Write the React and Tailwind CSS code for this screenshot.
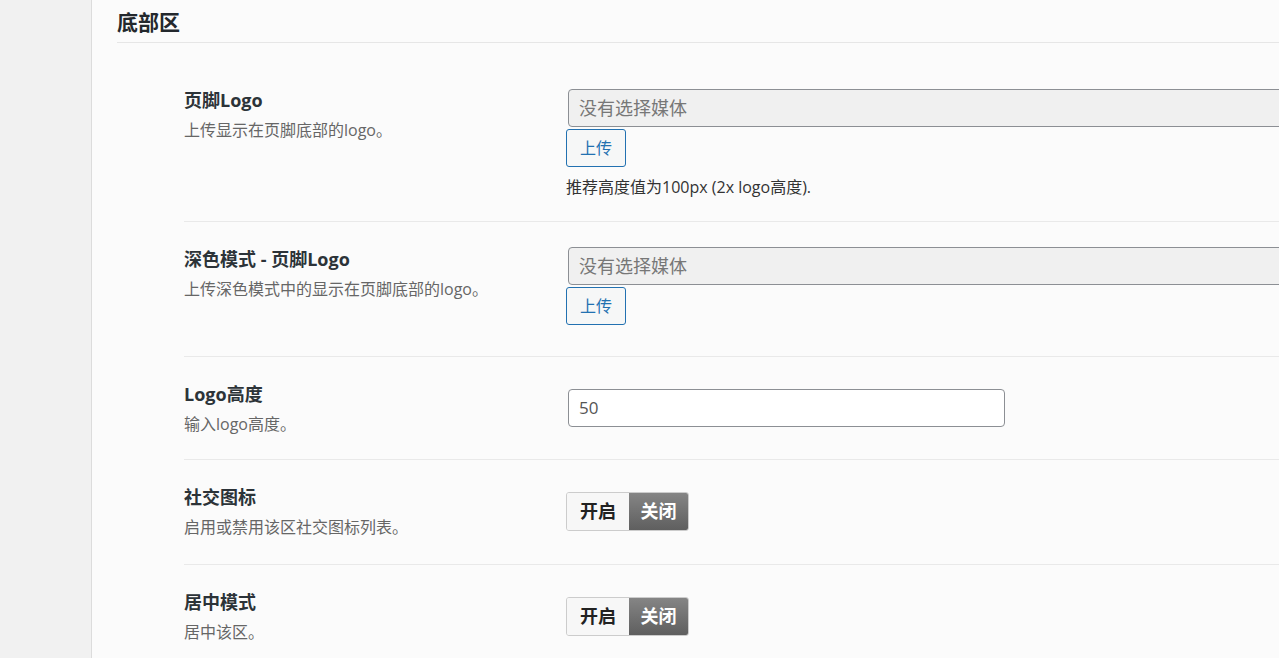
import React from 'react';

const FONT = { fontFamily: '"Open Sans", "Noto Sans CJK SC", sans-serif' };

const Label = ({ title, desc }) => (
    <div className="w-[382px] shrink-0 pt-[24px]">
        <div className="text-[18px] leading-[26px] font-bold text-[#2c3338]">{title}</div>
        <div className="mt-[5px] text-[16px] leading-[24px] text-[#666]">{desc}</div>
    </div>
);

const MediaField = ({ note, pt }) => (
    <div className={pt}>
        <div className="ml-[2px] w-[760px] h-[38px] bg-[#f0f0f0] border border-[#8c8f94] rounded-[4px] flex items-center pl-[10px] text-[18px] text-[#777]">
            没有选择媒体
        </div>
        <button className="mt-[2px] w-[60px] h-[38px] border border-[#2271b1] rounded-[3px] bg-[#f6f7f7] text-[#2271b1] text-[16px]">
            上传
        </button>
        {note && (
            <div className="mt-[9px] text-[16px] leading-[22px] text-[#333]">{note}</div>
        )}
    </div>
);

const Toggle = () => (
    <div className="pt-[32px]">
        <div className="flex w-[123px] h-[39px] border border-[#ccc] rounded-[3px] overflow-hidden text-[18px] font-bold">
            <div className="w-[62px] flex items-center justify-center bg-[#f7f7f7] text-[#222]">开启</div>
            <div className="flex-1 flex items-center justify-center bg-gradient-to-b from-[#858585] to-[#5f5f5f] text-white">关闭</div>
        </div>
    </div>
);

export default function App() {
    const rows = [
        {
            title: '页脚Logo',
            desc: '上传显示在页脚底部的logo。',
            control: <MediaField pt="pt-[26px]" note="推荐高度值为100px (2x logo高度)." />,
            h: 'h-[159px]',
        },
        {
            title: '深色模式 - 页脚Logo',
            desc: '上传深色模式中的显示在页脚底部的logo。',
            control: <MediaField pt="pt-[25px]" />,
            h: 'h-[135px]',
        },
        {
            title: 'Logo高度',
            desc: '输入logo高度。',
            control: (
                <div className="pt-[32px]">
                    <div className="ml-[2px] w-[437px] h-[38px] bg-white border border-[#8c8f94] rounded-[4px] flex items-center pl-[10px] text-[17px] text-[#555]">
                        50
                    </div>
                </div>
            ),
            h: 'h-[103px]',
        },
        {
            title: '社交图标',
            desc: '启用或禁用该区社交图标列表。',
            control: <Toggle />,
            h: 'h-[105px]',
        },
        {
            title: '居中模式',
            desc: '居中该区。',
            control: <Toggle />,
            h: 'h-[105px]',
        },
    ];

    return (
        <div className="flex w-full h-[658px] overflow-hidden bg-[#fbfbfb]" style={FONT}>
            {/* sidebar strip */}
            <div className="w-[92px] shrink-0 bg-[#f1f1f1] border-r border-[#dcdcdc]" />

            <div className="flex-1 min-w-0 pl-[25px]">
                <div className="w-[1400px] pt-[8px] pb-[6px] border-b border-[#e6e6e6] text-[21px] leading-[28px] font-bold text-[#23282d]">
                    底部区
                </div>

                <div className="ml-[67px] mt-[20px] w-[1400px]">
                    {rows.map((r, i) => (
                        <div
                            key={r.title}
                            className={`flex ${r.h} ${i < rows.length - 1 ? 'border-b border-[#e9e9e9]' : ''}`}
                        >
                            <Label title={r.title} desc={r.desc} />
                            <div className="flex-1">{r.control}</div>
                        </div>
                    ))}
                </div>
            </div>
        </div>
    );
}
